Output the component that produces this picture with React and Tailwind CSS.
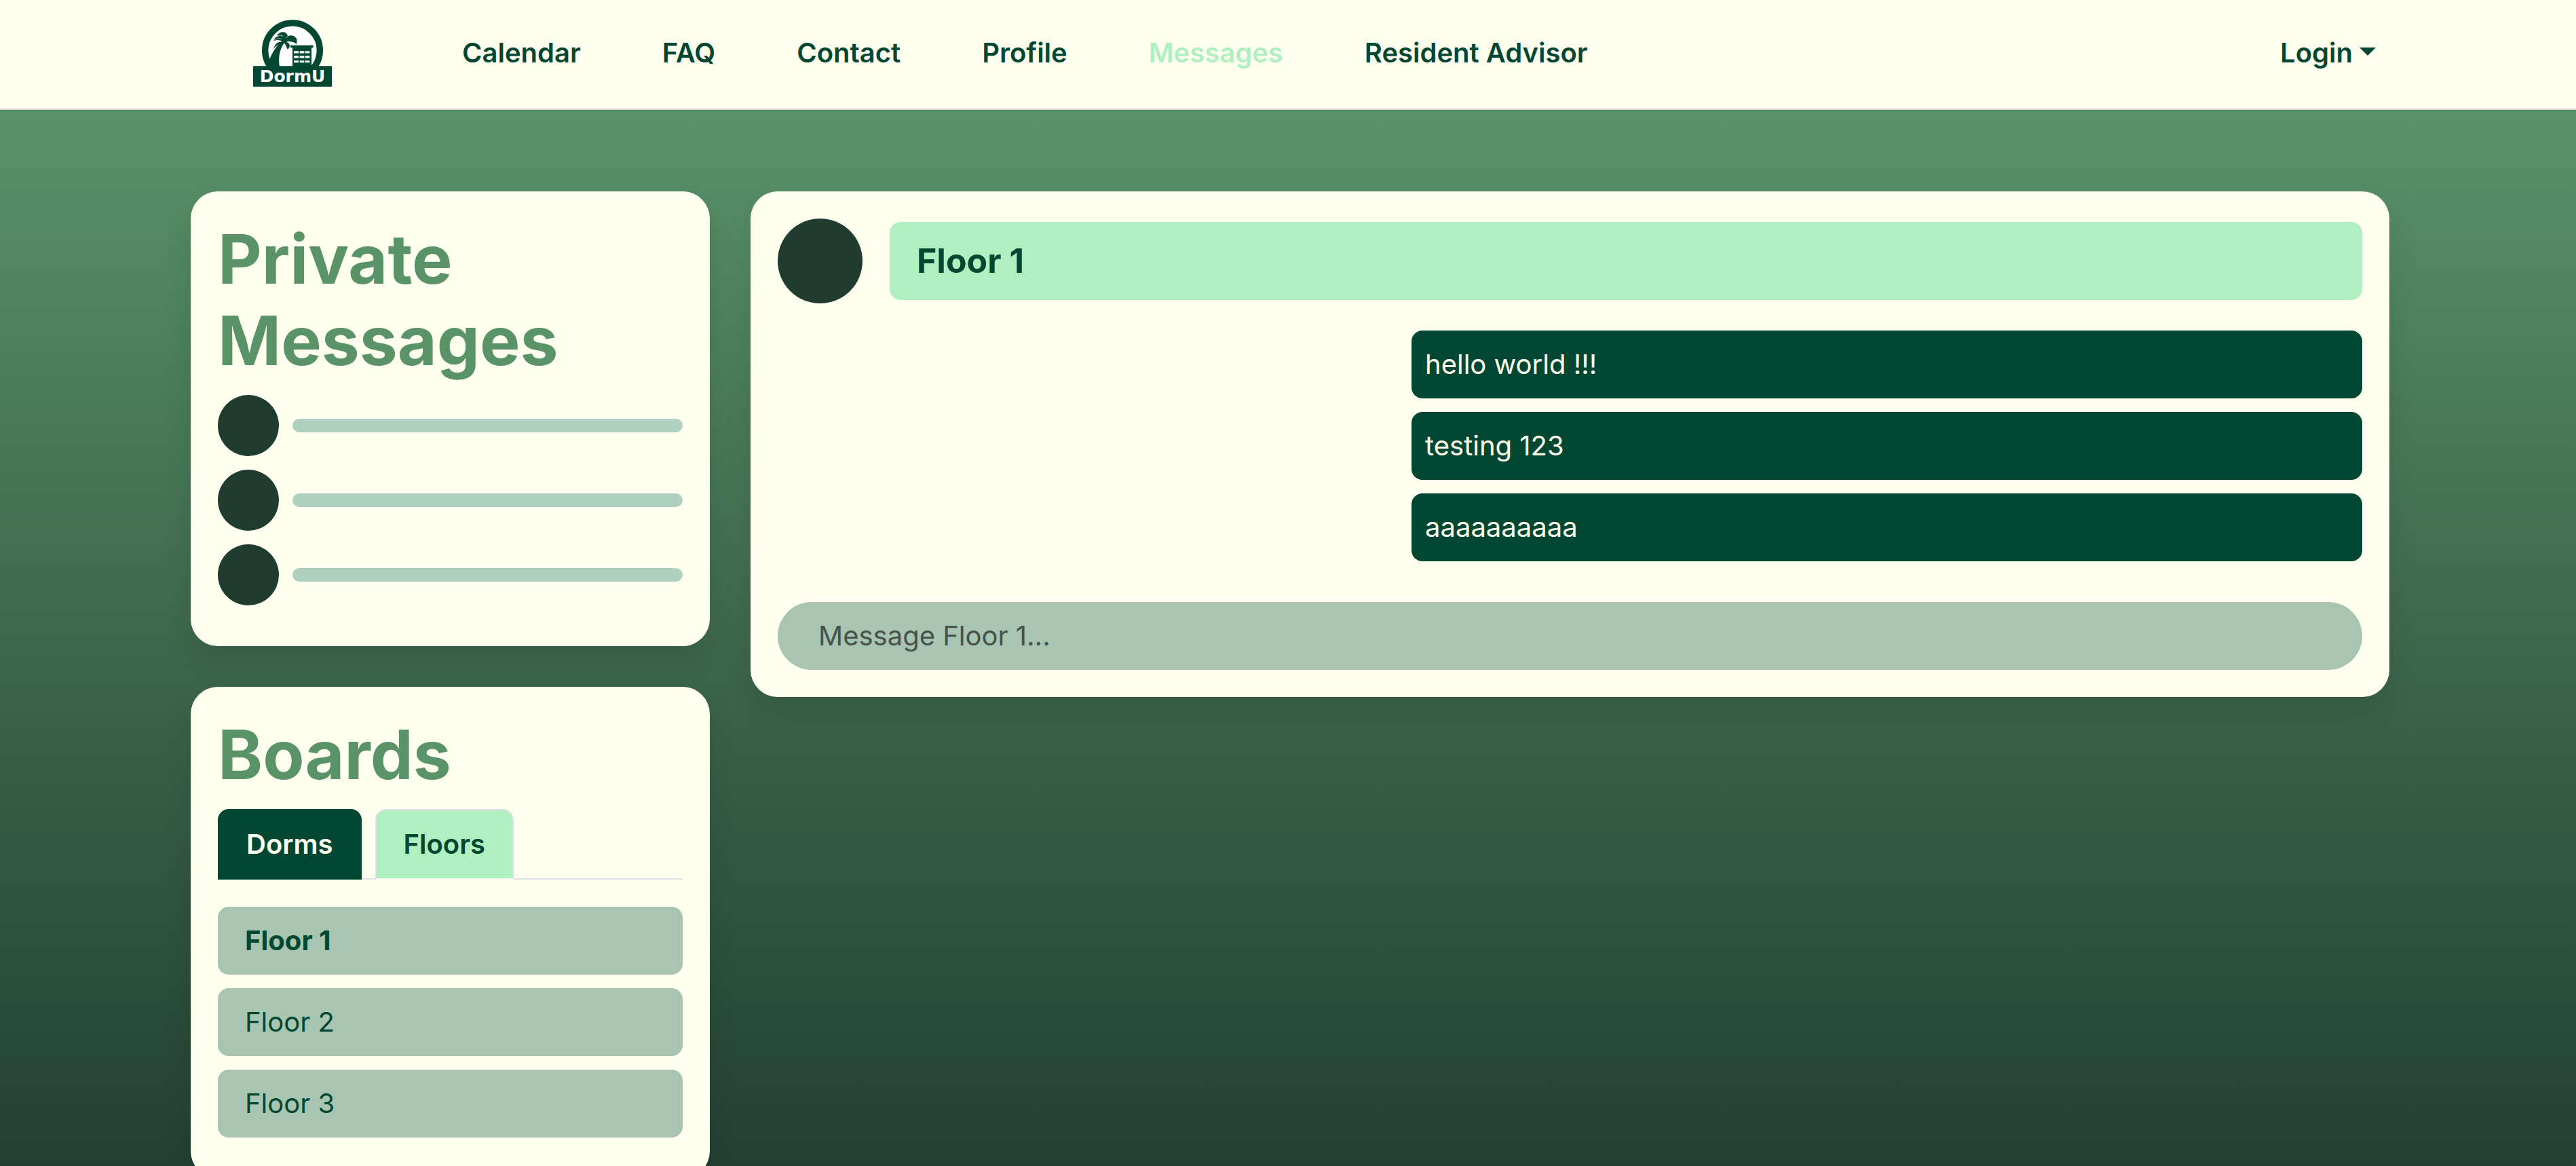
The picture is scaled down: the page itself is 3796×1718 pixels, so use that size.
import { useState } from "react";

const navLinks = [
  { label: "Calendar" },
  { label: "FAQ" },
  { label: "Contact" },
  { label: "Profile" },
  { label: "Messages", active: true },
  { label: "Resident Advisor" },
];

const contacts = [1, 2, 3];
const floors = ["Floor 1", "Floor 2", "Floor 3"];
const messages = ["hello world !!!", "testing 123", "aaaaaaaaaa"];

function Logo() {
  return (
    <svg viewBox="69 54 348 296" className="h-[99px] w-[116px]" role="img" aria-label="DormU">
      <circle cx="243" cy="189" r="121" fill="#ffffff" stroke="#024731" strokeWidth="28" />
      {/* palm tree */}
      <g fill="#024731">
        <path d="M143 226 C154 198 170 172 190 156 L207 155 C190 180 178 214 186 262 L134 262 Z" />
        <path d="M197 153 C194 136 186 126 174 124 C180 112 193 107 203 108 C214 109 221 117 222 127 C236 120 252 124 260 136 C264 144 263 153 260 162 C255 154 244 150 232 150 C222 149 211 152 206 157 Z" />
        <path d="M200 153 C190 142 172 141 159 148 C163 134 172 127 184 127 C196 128 204 139 206 150 Z" />
        <path d="M200 152 C187 149 166 155 160 182 C167 172 178 165 190 161 C197 158 202 156 205 153 Z" />
        <path d="M198 153 C207 154 213 161 221 185 C229 180 232 172 230 164 C227 156 214 148 202 148 Z" />
      </g>
      <path
        d="M172 125 Q187 120 202 126 M160 146 Q176 133 194 139 M222 128 L214 134"
        fill="none"
        stroke="#ffffff"
        strokeWidth="2"
      />
      {/* dormitory */}
      <path d="M234 167 H335 V177 H327 V262 H243 V177 H234 Z" fill="#024731" />
      <path
        d="M249 192h21v10h-21z M275 192h20v10h-20z M299 192h20v10h-20z M249 213h21v10h-21z M275 213h20v10h-20z M299 213h20v10h-20z M249 234h21v9h-21z M275 234h20v9h-20z M299 234h20v9h-20z"
        fill="#ffffff"
      />
      <rect x="69" y="258" width="348" height="92" rx="3" fill="#024731" />
      <text
        x="243"
        y="331"
        textAnchor="middle"
        fill="#ffffff"
        className="font-['DejaVu_Sans',sans-serif] text-[75px] font-bold"
      >
        DormU
      </text>
    </svg>
  );
}

function Card({ children }) {
  return (
    <section className="rounded-[40px] bg-[#ffffef] p-10 shadow-[0_20px_40px_rgba(0,0,0,0.1)]">
      {children}
    </section>
  );
}

function Heading({ children }) {
  return <h2 className="mb-5 text-[100px] leading-[120px] font-bold text-[#5a9367]">{children}</h2>;
}

export default function App() {
  const [tab, setTab] = useState("Dorms");
  const [floor, setFloor] = useState("Floor 1");

  return (
    <div className="h-screen overflow-hidden bg-[#203c31] font-['Inter',sans-serif] text-[40px] leading-[60px] text-[#024731]">
      <header className="flex h-[162px] items-center border-b-2 border-[#cfcbd0] bg-[#ffffef] pr-[295px] pb-1 pl-[373px] font-semibold">
        <a href="#home">
          <Logo />
        </a>
        <nav className="ml-48 flex gap-[120px]">
          {navLinks.map(({ label, active }) => (
            <a key={label} href="#page" className={active ? "text-[#b0f0c0]" : undefined}>
              {label}
            </a>
          ))}
        </nav>
        <button type="button" className="ml-auto flex items-center gap-2.5">
          Login
          <svg viewBox="0 0 24 12" className="mb-1 h-3 w-6" aria-hidden="true">
            <path d="M0 0H24L12 12Z" fill="#024731" />
          </svg>
        </button>
      </header>

      <main className="grid grid-cols-[51fr_161fr] items-start gap-[60px] bg-linear-to-b from-[#5a9367] to-[#203c31] pt-[120px] pr-[275px] pb-[60px] pl-[281px]">
        <aside className="flex flex-col gap-[60px]">
          <Card>
            <Heading>Private Messages</Heading>
            <ul>
              {contacts.map((id) => (
                <li key={id} className="mb-5 flex items-center gap-5">
                  <span className="size-[90px] shrink-0 rounded-full bg-[#203c31]" />
                  <span className="h-5 grow rounded-[10px] bg-[#b0d0c0]" />
                </li>
              ))}
            </ul>
          </Card>

          <Card>
            <Heading>Boards</Heading>
            <div role="tablist" className="mb-10 flex items-end gap-5 shadow-[inset_0_-2px_0_#dee2e6]">
              {["Dorms", "Floors"].map((name) => (
                <button
                  key={name}
                  type="button"
                  role="tab"
                  aria-selected={tab === name}
                  onClick={() => setTab(name)}
                  className={
                    tab === name
                      ? "h-[104px] rounded-t-2xl border-2 border-[#024731] bg-[#024731] px-10 font-semibold text-[#ffffef]"
                      : "h-[104px] rounded-t-2xl border-2 border-[#dedfe6] border-b-[#ffffef] bg-[#b0f0c0] px-10 font-semibold"
                  }
                >
                  {name}
                </button>
              ))}
            </div>
            <ul>
              {floors.map((name) => (
                <li key={name} className="mb-5">
                  <button
                    type="button"
                    onClick={() => setFloor(name)}
                    className={
                      floor === name
                        ? "w-full rounded-2xl bg-[#a8c5b2] px-10 py-5 text-left font-bold"
                        : "w-full rounded-2xl bg-[#a8c5b2] px-10 py-5 text-left"
                    }
                  >
                    {name}
                  </button>
                </li>
              ))}
            </ul>
          </Card>
        </aside>

        <Card>
          <div className="mb-10 flex items-center gap-10">
            <span className="size-[125px] shrink-0 rounded-full bg-[#203c31]" />
            <h1 className="grow rounded-2xl bg-[#b0f0c0] px-10 py-5 text-[50px] leading-[75px] font-bold">{floor}</h1>
          </div>
          <ul className="mb-10 flex flex-col items-end">
            {messages.map((text) => (
              <li key={text} className="mb-5 w-3/5 rounded-2xl bg-[#024731] p-5 text-[#ffffef]">
                {text}
              </li>
            ))}
          </ul>
          <input
            type="text"
            aria-label={`Message ${floor}`}
            placeholder={`Message ${floor}...`}
            className="block w-full rounded-full bg-[#a8c5b2] px-[60px] py-5 placeholder:text-[#46524c]"
          />
        </Card>
      </main>
    </div>
  );
}
